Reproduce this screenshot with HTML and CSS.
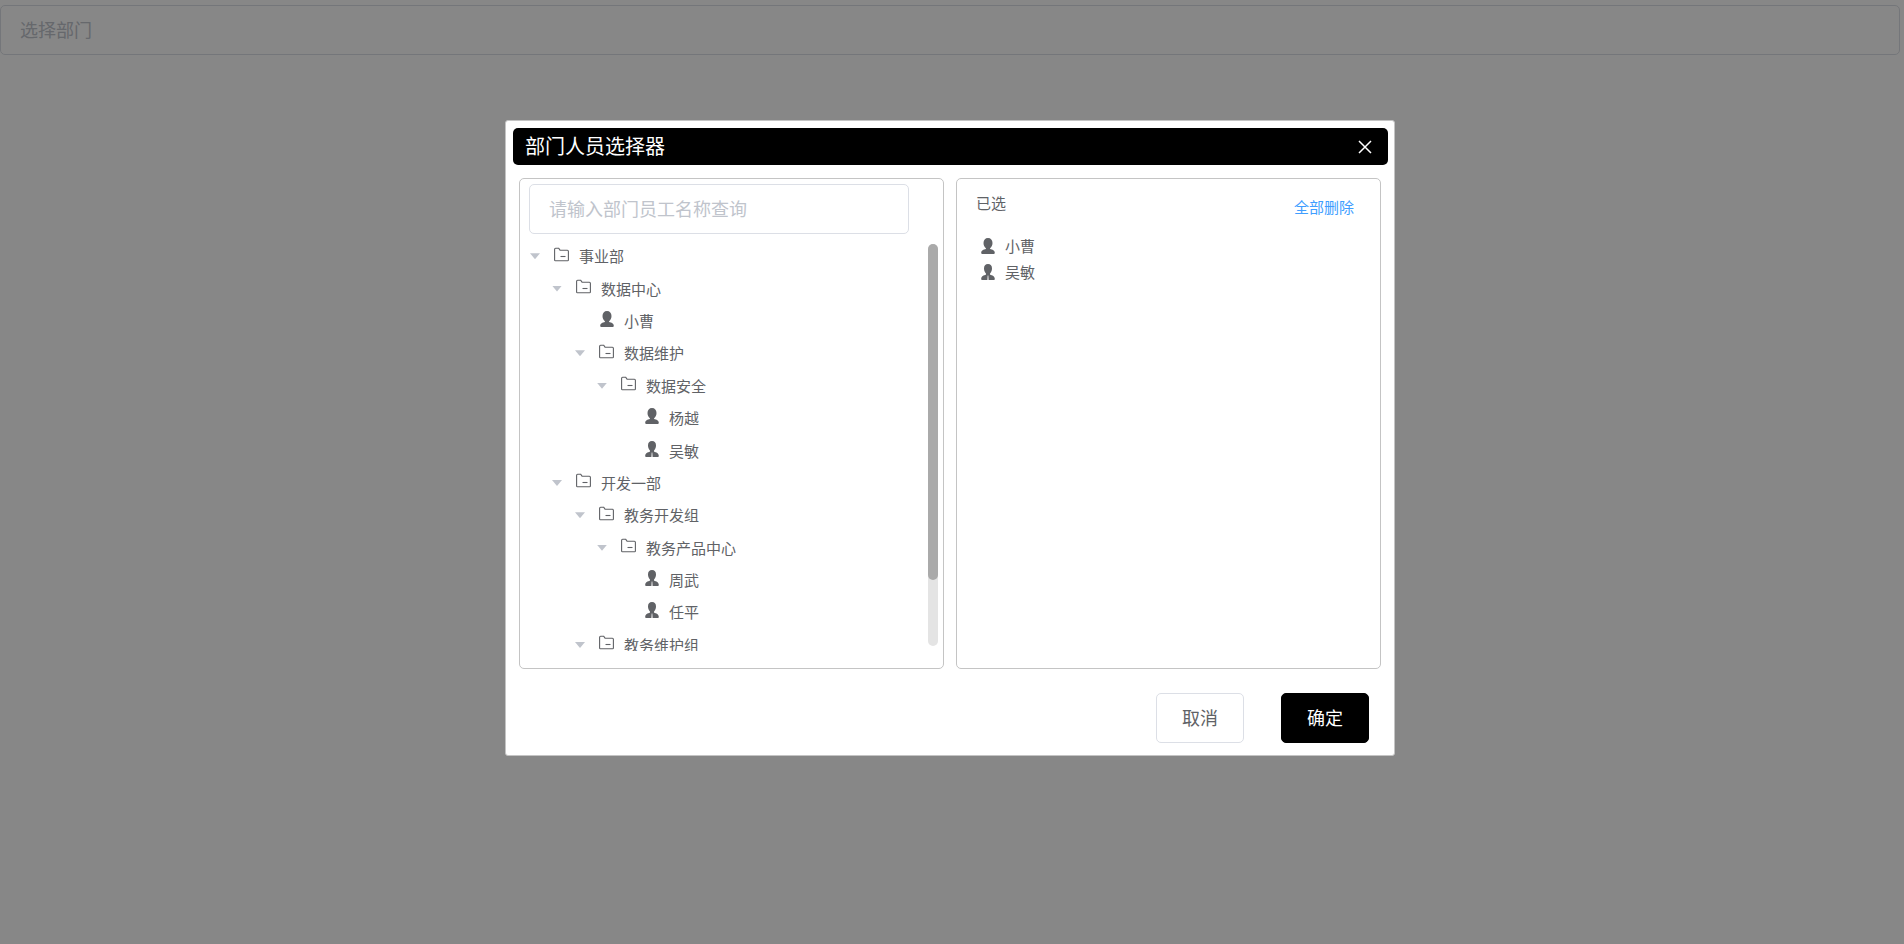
FILE: index.html
```html
<!DOCTYPE html>
<html lang="zh-CN">
<head>
<meta charset="utf-8">
<title>部门人员选择器</title>
<link rel="stylesheet" href="styles.css">
</head>
<body>
<svg class="sprite" aria-hidden="true">
  <symbol id="folder" viewBox="0 0 15 15"><path d="M.6 12.900V2.200q0-1 1-1H4.600l1.600 2.100h7.200q1 0 1 1v8.600q0 .8-.8.8H1.400q-.8 0-.8-.8z" fill="none" stroke="currentColor" stroke-width="1.100" stroke-linejoin="round"/><path d="M6.500 9.500h5" fill="none" stroke="currentColor" stroke-width="1.100"/></symbol>
  <symbol id="user" viewBox="0 0 14 16"><path d="M7 0C4.200 0 2.500 2 2.500 5c0 2.300 1 4.200 2.400 5.200v.7C2.500 11.500.2 12.300.2 14.800c0 .8.6 1.200 1.300 1.200h11c.7 0 1.300-.4 1.300-1.200 0-2.500-2.300-3.300-4.700-3.900v-.7c1.400-1 2.400-2.900 2.400-5.200C11.500 2 9.800 0 7 0z" fill="currentColor"/></symbol>
  <symbol id="member" viewBox="0 0 14 16"><path d="M7 0C4.400 0 3 1.800 3 4.400c0 2 .8 3.800 1.900 4.800v1.500C2.800 11.300.2 12.200.2 14.800c0 .8.400 1.200 1 1.200h5.200l.3-4.500h.6l.3 4.500h5.200c.6 0 1-.4 1-1.200 0-2.600-2.600-3.500-4.700-4.100V9.200c1.100-1 1.900-2.800 1.900-4.800C11 1.800 9.600 0 7 0z" fill="currentColor"/></symbol>
</svg>

<main class="page">
  <input class="field" type="text" placeholder="选择部门" aria-label="选择部门">
</main>

<div class="overlay">
  <section class="dialog" role="dialog" aria-modal="true" aria-labelledby="dialog-title">
    <header class="dialog-header">
      <h1 class="dialog-title" id="dialog-title">部门人员选择器</h1>
      <button class="close" type="button" aria-label="关闭"><svg class="close-icon" viewBox="0 0 14 14"><path d="M1 1l12 12M13 1L1 13" fill="none" stroke="currentColor" stroke-width="1.500"/></svg></button>
    </header>

    <div class="panels">
      <div class="panel source">
        <input class="field search" type="text" placeholder="请输入部门员工名称查询" aria-label="请输入部门员工名称查询">
        <div class="tree-view">
          <ul class="tree" role="tree">
            <li class="node" role="treeitem" aria-level="1"><span class="caret"></span><svg class="folder"><use href="#folder"/></svg>事业部</li>
            <li class="node level-2" role="treeitem" aria-level="2"><span class="caret"></span><svg class="folder"><use href="#folder"/></svg>数据中心</li>
            <li class="node level-3" role="treeitem" aria-level="3"><span class="caret leaf"></span><svg class="person"><use href="#user"/></svg>小曹</li>
            <li class="node level-3" role="treeitem" aria-level="3"><span class="caret"></span><svg class="folder"><use href="#folder"/></svg>数据维护</li>
            <li class="node level-4" role="treeitem" aria-level="4"><span class="caret"></span><svg class="folder"><use href="#folder"/></svg>数据安全</li>
            <li class="node level-5" role="treeitem" aria-level="5"><span class="caret leaf"></span><svg class="person"><use href="#user"/></svg>杨越</li>
            <li class="node level-5" role="treeitem" aria-level="5"><span class="caret leaf"></span><svg class="person"><use href="#member"/></svg>吴敏</li>
            <li class="node level-2" role="treeitem" aria-level="2"><span class="caret"></span><svg class="folder"><use href="#folder"/></svg>开发一部</li>
            <li class="node level-3" role="treeitem" aria-level="3"><span class="caret"></span><svg class="folder"><use href="#folder"/></svg>教务开发组</li>
            <li class="node level-4" role="treeitem" aria-level="4"><span class="caret"></span><svg class="folder"><use href="#folder"/></svg>教务产品中心</li>
            <li class="node level-5" role="treeitem" aria-level="5"><span class="caret leaf"></span><svg class="person"><use href="#member"/></svg>周武</li>
            <li class="node level-5" role="treeitem" aria-level="5"><span class="caret leaf"></span><svg class="person"><use href="#member"/></svg>任平</li>
            <li class="node level-3" role="treeitem" aria-level="3"><span class="caret"></span><svg class="folder"><use href="#folder"/></svg>教务维护组</li>
          </ul>
          <div class="track"><div class="thumb"></div></div>
        </div>
      </div>

      <div class="panel selected">
        <div class="selected-head">
          <h2 class="selected-title">已选</h2>
          <a class="clear" href="#">全部删除</a>
        </div>
        <ul class="selected-list">
          <li class="chosen"><svg class="person"><use href="#user"/></svg>小曹</li>
          <li class="chosen"><svg class="person"><use href="#member"/></svg>吴敏</li>
        </ul>
      </div>
    </div>

    <footer class="actions">
      <button class="button" type="button">取消</button>
      <button class="button primary" type="button">确定</button>
    </footer>
  </section>
</div>
</body>
</html>
```
FILE: styles.css
```css
* { box-sizing: border-box; }

body {
  margin: 0;
  background: #fff;
  color: #606266;
  font: 400 15px/20px "Noto Sans CJK SC", sans-serif;
}

ul, h1, h2 { margin: 0; padding: 0; list-style: none; font-weight: inherit; }

.sprite { display: none; }

.page { padding: 5px 4px 0 0; }

.field {
  display: block;
  width: 100%;
  height: 50px;
  padding: 0 19px 3px;
  border: 1px solid #dcdfe6;
  border-radius: 5px;
  background: #fff;
  color: #606266;
  font: inherit;
  font-size: 18px;
}
.field::placeholder { color: #c0c4cc; opacity: 1; }

.overlay {
  position: fixed;
  inset: 0;
  display: flex;
  justify-content: center;
  align-items: flex-start;
  padding: 120px 4px 0 0;
  background: rgba(0, 0, 0, 0.47);
}

.dialog {
  width: min(890px, 100%);
  padding: 7px 6px 12px 7px;
  border: 1px solid #c4c4c4;
  border-radius: 3px;
  background: #fff;
}

.dialog-header {
  display: flex;
  justify-content: space-between;
  align-items: center;
  height: 37px;
  padding: 0 16px 0 12px;
  border-radius: 5px;
  background: #000;
  color: #fff;
}
.dialog-title { padding-bottom: 2px; font-size: 20px; line-height: 34px; }
.close { display: flex; padding: 0; border: 0; background: none; color: #fff; }
.close-icon { width: 14px; height: 14px; }

.panels {
  display: grid;
  grid-template-columns: 1fr 1fr;
  gap: 12px;
  margin: 13px 7px 0 6px;
}
.panel {
  height: 491px;
  border: 1px solid #c4c4c4;
  border-radius: 5px;
}

.source { padding: 5px 5px 0 9px; }
.search { width: calc(100% - 29px); }

.tree-view {
  display: flex;
  justify-content: space-between;
  height: 411px;
  margin-top: 6px;
  overflow: hidden;
}
.tree { display: flex; flex-direction: column; flex: 1; height: 421px; }
.node { display: flex; flex: 1; align-items: center; }
.level-2 { padding-left: 22px; }
.level-3 { padding-left: 45px; }
.level-4 { padding-left: 67px; }
.level-5 { padding-left: 90px; }

.caret {
  width: 10px;
  height: 6px;
  margin: 0 14px 0 1px;
  background: #c0c4cc;
  clip-path: polygon(0 0, 100% 0, 50% 100%);
}
.leaf { visibility: hidden; }
.folder { width: 15px; height: 15px; margin: 0 10px 4px 0; }
.person { width: 14px; height: 16px; margin: 0 10px 4px 1px; }

.track {
  width: 10px;
  height: 402px;
  margin-top: 4px;
  border-radius: 5px;
  background: #e4e4e4;
}
.thumb { height: 336px; border-radius: 5px; background: #aaa; }

.selected { padding: 14px 26px 0 19px; }
.selected-head { display: flex; justify-content: space-between; }
.selected-title { font-size: 15px; }
.clear { margin-top: 4px; color: #409eff; text-decoration: none; }
.selected-list { margin-top: 16px; }
.chosen { display: flex; align-items: center; height: 26px; }
.chosen .person { margin: 0 10px 0 5px; }

.actions {
  display: flex;
  justify-content: flex-end;
  gap: 37px;
  padding: 24px 19px 0 0;
}
.button {
  width: 88px;
  height: 50px;
  padding: 0 0 3px;
  border: 1px solid #dcdfe6;
  border-radius: 5px;
  background: #fff;
  color: #606266;
  font: inherit;
  font-size: 18px;
}
.primary { border-color: #000; background: #000; color: #fff; }
```
